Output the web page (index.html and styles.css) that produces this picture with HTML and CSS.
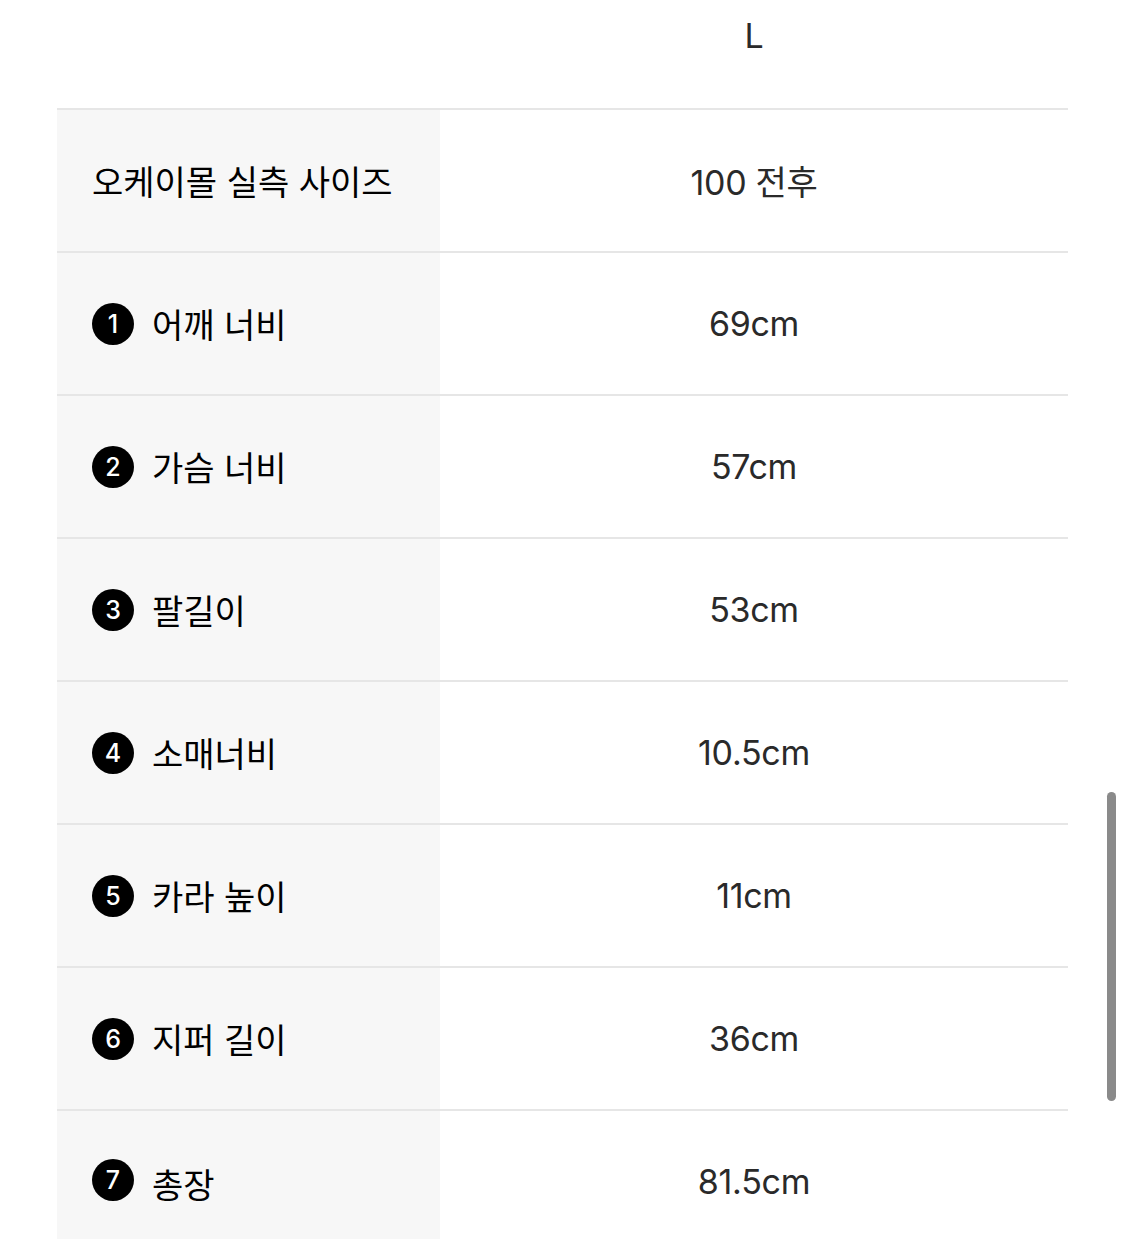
FILE: index.html
```html
<!DOCTYPE html>
<html lang="ko">
<head>
<meta charset="utf-8">
<link rel="stylesheet" href="styles.css">
</head>
<body>
<div class="page">
  <div class="size-table">
    <div class="row head">
      <div class="label-cell blank"></div>
      <div class="value-cell">L</div>
    </div>
    <div class="row">
      <div class="label-cell">오케이몰 실측 사이즈</div>
      <div class="value-cell">100 전후</div>
    </div>
    <div class="row">
      <div class="label-cell"><span class="num">1</span>어깨 너비</div>
      <div class="value-cell">69cm</div>
    </div>
    <div class="row">
      <div class="label-cell"><span class="num">2</span>가슴 너비</div>
      <div class="value-cell">57cm</div>
    </div>
    <div class="row">
      <div class="label-cell"><span class="num">3</span>팔길이</div>
      <div class="value-cell">53cm</div>
    </div>
    <div class="row">
      <div class="label-cell"><span class="num">4</span>소매너비</div>
      <div class="value-cell">10.5cm</div>
    </div>
    <div class="row">
      <div class="label-cell"><span class="num">5</span>카라 높이</div>
      <div class="value-cell">11cm</div>
    </div>
    <div class="row">
      <div class="label-cell"><span class="num">6</span>지퍼 길이</div>
      <div class="value-cell">36cm</div>
    </div>
    <div class="row last">
      <div class="label-cell"><span class="num">7</span>총장</div>
      <div class="value-cell">81.5cm</div>
    </div>
  </div>
  <div class="scrollbar"></div>
</div>
</body>
</html>
```

FILE: styles.css
```css
html, body {
  margin: 0;
  padding: 0;
  background: #ffffff;
  overflow: hidden;
}

.page {
  position: relative;
  width: 1125px;
  height: 1239px;
  overflow: hidden;
  font-family: Inter, "Noto Sans CJK KR", sans-serif;
}

.size-table {
  margin-left: 57px;
  width: 1011px;
  display: flex;
  flex-direction: column;
}

.row {
  display: grid;
  grid-template-columns: 383px 628px;
  height: 141px;
  border-top: 2px solid #e6e6e6;
}

.row.head {
  height: 108px;
  border-top: none;
}

.row.last {
  height: 200px;
}

.label-cell {
  background: #f7f7f7;
  display: flex;
  align-items: center;
  gap: 18px;
  padding-left: 35px;
  font-family: "Noto Sans CJK KR", sans-serif;
  font-size: 34px;
  color: #000000;
  letter-spacing: 0;
}

.label-cell.blank {
  background: transparent;
}

.row.last .label-cell {
  height: 200px;
  align-items: flex-start;
  padding-top: 48px;
  box-sizing: border-box;
}

.row.last .value-cell {
  height: 141px;
}

.value-cell {
  display: flex;
  align-items: center;
  justify-content: center;
  font-size: 34px;
  color: #2a2a2a;
  letter-spacing: -0.3px;
}

.row.head .value-cell {
  align-items: flex-start;
  padding-top: 15px;
}

.num {
  flex: none;
  width: 42px;
  height: 42px;
  border-radius: 50%;
  background: #000000;
  color: #ffffff;
  font-family: Inter, sans-serif;
  font-size: 25px;
  font-weight: 500;
  display: flex;
  align-items: center;
  justify-content: center;
  letter-spacing: 0;
}

.scrollbar {
  position: absolute;
  left: 1107px;
  top: 792px;
  width: 9px;
  height: 309px;
  border-radius: 5px;
  background: #8a8a8a;
}
```
